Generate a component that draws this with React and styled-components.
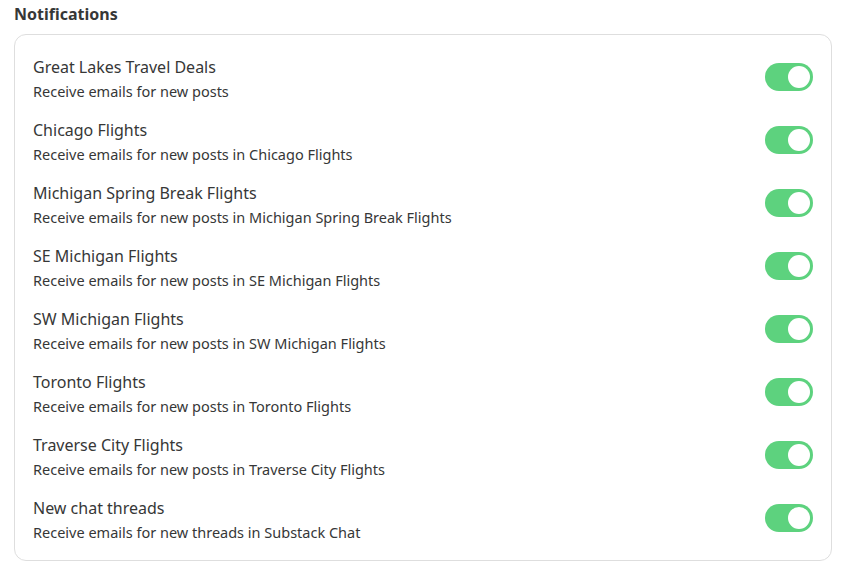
import React from 'react';
import styled, { createGlobalStyle } from 'styled-components';

const GlobalStyle = createGlobalStyle`
  body {
    margin: 0;
    background: #fff;
    font-family: "Noto Sans", "Open Sans", sans-serif;
    color: #363737;
  }
`;

const Page = styled.div`
  padding: 3px 14px 0 14px;
  width: 818px;
`;

const Heading = styled.h2`
  margin: 0 0 8px 0;
  font-size: 16px;
  line-height: 23px;
  font-weight: 700;
  color: #363737;
`;

const Card = styled.div`
  border: 1px solid #dedede;
  border-radius: 12px;
  padding: 10px 18px 11px 18px;
`;

const Row = styled.div`
  display: flex;
  align-items: center;
  justify-content: space-between;
  height: 63px;
`;

const Texts = styled.div`
  display: flex;
  flex-direction: column;
  padding-top: 3px;
`;

const Title = styled.div`
  font-size: 16px;
  line-height: 25px;
  color: #363737;
`;

const Sub = styled.div`
  font-size: 14.5px;
  line-height: 22px;
  color: #363737;
`;

const Toggle = styled.button`
  position: relative;
  width: 48px;
  height: 28px;
  border: none;
  border-radius: 14px;
  padding: 0;
  background: ${p => (p.$on ? '#5dd27e' : '#cfcfcf')};
  cursor: pointer;

  &::after {
    content: '';
    position: absolute;
    top: 3px;
    left: ${p => (p.$on ? '23px' : '3px')};
    width: 22px;
    height: 22px;
    border-radius: 50%;
    background: #fff;
  }
`;

const items = [
  ['Great Lakes Travel Deals', 'Receive emails for new posts'],
  ['Chicago Flights', 'Receive emails for new posts in Chicago Flights'],
  ['Michigan Spring Break Flights', 'Receive emails for new posts in Michigan Spring Break Flights'],
  ['SE Michigan Flights', 'Receive emails for new posts in SE Michigan Flights'],
  ['SW Michigan Flights', 'Receive emails for new posts in SW Michigan Flights'],
  ['Toronto Flights', 'Receive emails for new posts in Toronto Flights'],
  ['Traverse City Flights', 'Receive emails for new posts in Traverse City Flights'],
  ['New chat threads', 'Receive emails for new threads in Substack Chat'],
];

const App = () => {
  const [on, setOn] = React.useState(items.map(() => true));
  return (
    <Page>
      <GlobalStyle />
      <Heading>Notifications</Heading>
      <Card>
        {items.map(([title, sub], i) => (
          <Row key={title}>
            <Texts>
              <Title>{title}</Title>
              <Sub>{sub}</Sub>
            </Texts>
            <Toggle
              $on={on[i]}
              aria-label={title}
              onClick={() => setOn(on.map((v, j) => (j === i ? !v : v)))}
            />
          </Row>
        ))}
      </Card>
    </Page>
  );
};

export default App;
